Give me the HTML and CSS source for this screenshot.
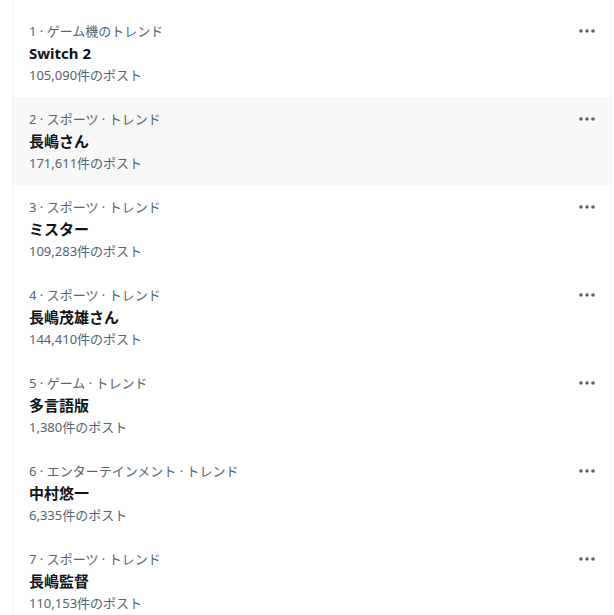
FILE: index.html
```html
<!DOCTYPE html>
<html lang="ja">
  <head>
    <meta charset="UTF-8" />
    <meta name="viewport" content="width=device-width, initial-scale=1.0" />
    <title>トレンド</title>
    <link rel="stylesheet" href="styles.css">
  </head>
  <body>
    <div class="timeline">
      <div class="trend">
        <div class="trend-body">
          <div class="trend-meta">1 · ゲーム機のトレンド</div>
          <div class="trend-name">Switch 2</div>
          <div class="trend-count">105,090件のポスト</div>
        </div>
        <button class="more-btn" aria-label="その他">
          <svg viewBox="0 0 18 6" width="18" height="6"><circle cx="3" cy="3" r="1.8" /><circle cx="9" cy="3" r="1.8" /><circle cx="15" cy="3" r="1.8" /></svg>
        </button>
      </div>

      <div class="trend hover">
        <div class="trend-body">
          <div class="trend-meta">2 · スポーツ · トレンド</div>
          <div class="trend-name">長嶋さん</div>
          <div class="trend-count">171,611件のポスト</div>
        </div>
        <button class="more-btn" aria-label="その他">
          <svg viewBox="0 0 18 6" width="18" height="6"><circle cx="3" cy="3" r="1.8" /><circle cx="9" cy="3" r="1.8" /><circle cx="15" cy="3" r="1.8" /></svg>
        </button>
      </div>

      <div class="trend">
        <div class="trend-body">
          <div class="trend-meta">3 · スポーツ · トレンド</div>
          <div class="trend-name">ミスター</div>
          <div class="trend-count">109,283件のポスト</div>
        </div>
        <button class="more-btn" aria-label="その他">
          <svg viewBox="0 0 18 6" width="18" height="6"><circle cx="3" cy="3" r="1.8" /><circle cx="9" cy="3" r="1.8" /><circle cx="15" cy="3" r="1.8" /></svg>
        </button>
      </div>

      <div class="trend">
        <div class="trend-body">
          <div class="trend-meta">4 · スポーツ · トレンド</div>
          <div class="trend-name">長嶋茂雄さん</div>
          <div class="trend-count">144,410件のポスト</div>
        </div>
        <button class="more-btn" aria-label="その他">
          <svg viewBox="0 0 18 6" width="18" height="6"><circle cx="3" cy="3" r="1.8" /><circle cx="9" cy="3" r="1.8" /><circle cx="15" cy="3" r="1.8" /></svg>
        </button>
      </div>

      <div class="trend">
        <div class="trend-body">
          <div class="trend-meta">5 · ゲーム · トレンド</div>
          <div class="trend-name">多言語版</div>
          <div class="trend-count">1,380件のポスト</div>
        </div>
        <button class="more-btn" aria-label="その他">
          <svg viewBox="0 0 18 6" width="18" height="6"><circle cx="3" cy="3" r="1.8" /><circle cx="9" cy="3" r="1.8" /><circle cx="15" cy="3" r="1.8" /></svg>
        </button>
      </div>

      <div class="trend">
        <div class="trend-body">
          <div class="trend-meta">6 · エンターテインメント · トレンド</div>
          <div class="trend-name">中村悠一</div>
          <div class="trend-count">6,335件のポスト</div>
        </div>
        <button class="more-btn" aria-label="その他">
          <svg viewBox="0 0 18 6" width="18" height="6"><circle cx="3" cy="3" r="1.8" /><circle cx="9" cy="3" r="1.8" /><circle cx="15" cy="3" r="1.8" /></svg>
        </button>
      </div>

      <div class="trend">
        <div class="trend-body">
          <div class="trend-meta">7 · スポーツ · トレンド</div>
          <div class="trend-name">長嶋監督</div>
          <div class="trend-count">110,153件のポスト</div>
        </div>
        <button class="more-btn" aria-label="その他">
          <svg viewBox="0 0 18 6" width="18" height="6"><circle cx="3" cy="3" r="1.8" /><circle cx="9" cy="3" r="1.8" /><circle cx="15" cy="3" r="1.8" /></svg>
        </button>
      </div>
    </div>
  </body>
</html>
```

FILE: styles.css
```css
body {
  margin: 0;
  background-color: white;
  font-family: "Noto Sans", "Noto Sans CJK JP", sans-serif;
  color: #0f1419;
  overflow: hidden;
}
.timeline {
  width: 598px;
  margin-left: 12px;
  padding-top: 9px;
  border-left: 1px solid #eff3f4;
  border-right: 1px solid #eff3f4;
}
.trend {
  display: flex;
  justify-content: space-between;
  align-items: flex-start;
  padding: 12px 16px;
  cursor: pointer;
}
.trend.hover {
  background-color: #f7f7f7;
}
.trend-meta,
.trend-count {
  font-size: 13px;
  line-height: 20px;
  color: #536471;
}
.trend-name {
  font-size: 15px;
  line-height: 24px;
  font-weight: bold;
}
.more-btn {
  display: flex;
  align-items: center;
  justify-content: center;
  width: 20px;
  height: 20px;
  margin-right: -2px;
  padding: 0;
  border: none;
  background: none;
  cursor: pointer;
}
.more-btn svg {
  fill: #536471;
}
```
